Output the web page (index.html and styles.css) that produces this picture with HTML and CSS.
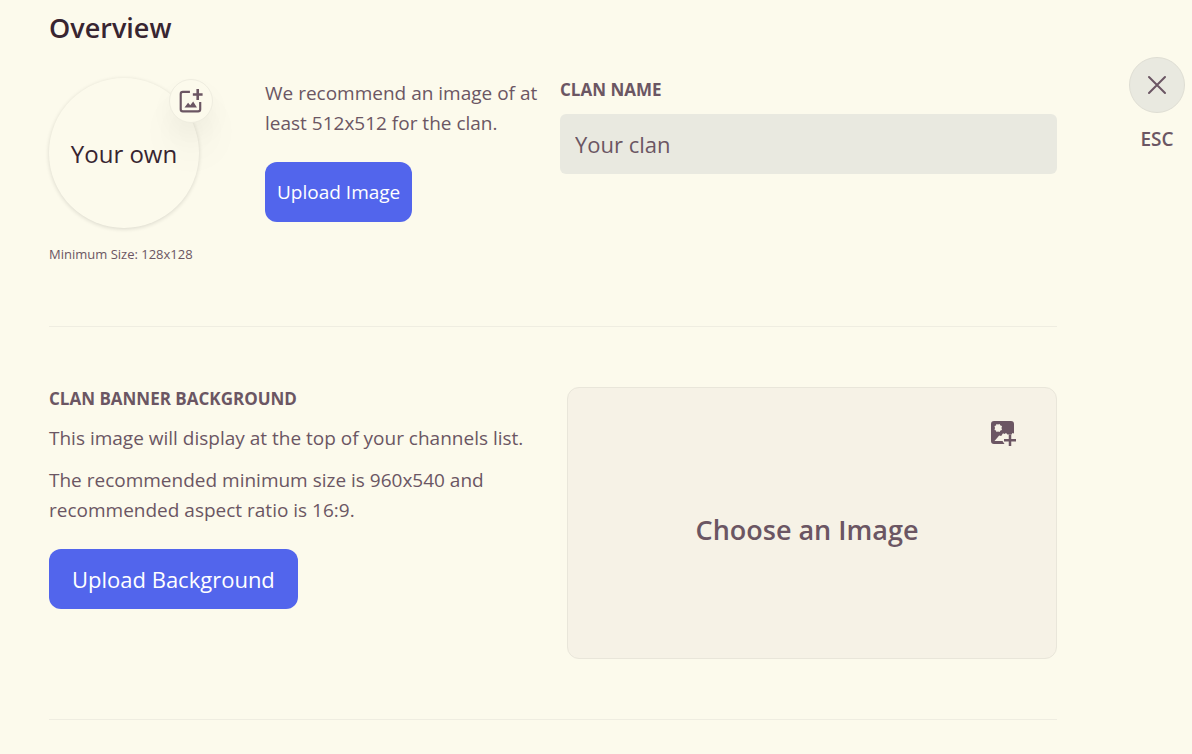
FILE: index.html
```html
<!DOCTYPE html>
<html lang="en">
<head>
<meta charset="utf-8">
<title>Overview</title>
<link rel="stylesheet" href="styles.css">
</head>
<body>
<div class="settings">
  <main class="content">
    <h1 class="title">Overview</h1>
    <section class="section identity">
      <div class="identity-media">
        <div class="avatar-column">
          <div class="avatar">
            <span>Your own</span>
            <button class="avatar-add" type="button" aria-label="Add image">
              <svg width="26" height="26" viewBox="0 0 24 24" fill="currentColor" aria-hidden="true">
                <path d="M18.500 20.500h-14a1 1 0 0 1-1-1v-14a1 1 0 0 1 1-1H11v-2H4.500a3 3 0 0 0-3 3v14a3 3 0 0 0 3 3h14a3 3 0 0 0 3-3V13h-2v6.500a1 1 0 0 1-1 1z"/>
                <path d="M6 18h11.500l-3.500-5.500-2.700 3.400-2-2.400z"/>
                <path d="M17 1h2.400v3.800h3.300v2.400h-3.300V11H17V7.200h-3.300V4.800H17z"/>
              </svg>
            </button>
          </div>
          <p class="hint">Minimum Size: 128x128</p>
        </div>
        <div class="upload">
          <p class="text">We recommend an image of at least 512x512 for the clan.</p>
          <button class="button" type="button">Upload Image</button>
        </div>
      </div>
      <div class="field">
        <label class="label" for="clan-name">CLAN NAME</label>
        <input class="input" id="clan-name" type="text" value="Your clan">
      </div>
    </section>
    <section class="section banner">
      <div class="banner-info">
        <h2 class="label">CLAN BANNER BACKGROUND</h2>
        <p class="text">This image will display at the top of your channels list.</p>
        <p class="text">The recommended minimum size is 960x540 and recommended aspect ratio is 16:9.</p>
        <button class="button button-large" type="button">Upload Background</button>
      </div>
      <button class="picker" type="button">
        <span>Choose an Image</span>
        <svg class="picker-icon" width="26" height="26" viewBox="0 0 26 26" aria-hidden="true">
          <path fill="currentColor" fill-rule="evenodd" d="M4 1h17a3 3 0 0 1 3 3v9.500l-1.500-.5-1 1.500h-4L16 13l-1.500 1-1.500-.8-1.800 2.800-2-.5L4.500 21h8l2 3H4a3 3 0 0 1-3-3V4a3 3 0 0 1 3-3zM6.500 4 6 5.500 4.500 6l.5 2-.5 2 1.500.5.500 1.500 1.500-.5 1.500.5 1-1.500 1.500-.5-.5-2 .5-2-1.500-.5L9.500 4 8 4.500z"/>
          <path fill="none" stroke="currentColor" stroke-width="2.500" d="M20 14.500V26M14 20.300h12"/>
        </svg>
      </button>
    </section>
  </main>
  <aside class="exit">
    <button class="close" type="button" id="close" aria-label="Close">
      <svg width="20" height="20" viewBox="0 0 20 20" fill="none" stroke="currentColor" stroke-width="2" stroke-linecap="round" aria-hidden="true">
        <path d="M2 2l16 16M18 2L2 18"/>
      </svg>
    </button>
    <span class="exit-label">ESC</span>
  </aside>
</div>
</body>
</html>
```
FILE: styles.css
```css
* {
  box-sizing: border-box;
}

body {
  margin: 0;
  background: #fcfaec;
  color: #6b5663;
  font-family: "Open Sans", "Noto Sans", sans-serif;
}

h1, h2, p {
  margin: 0;
}

button, input {
  font-family: inherit;
}

button {
  padding: 0;
  border: 0;
  cursor: pointer;
}

.settings {
  display: flex;
  gap: 72px;
  padding: 8px 7px 0 49px;
}

.content {
  flex: 1;
  min-width: 0;
}

.title {
  margin-bottom: 30px;
  color: #382531;
  font-size: 27px;
  font-weight: 600;
  line-height: 40px;
}

.section {
  display: grid;
  grid-template-columns: 1fr 1fr;
  padding-bottom: 60px;
  border-bottom: 1px solid #efede1;
}

.identity {
  gap: 14px;
}

.identity-media {
  display: flex;
  gap: 66px;
}

.avatar-column {
  flex: none;
  width: 150px;
}

.avatar {
  position: relative;
  display: grid;
  place-items: center;
  width: 150px;
  height: 150px;
  border-radius: 50%;
  box-shadow: 0 1px 4px #00000024;
  color: #382531;
  font-size: 24px;
}

.avatar-add {
  position: absolute;
  top: 1px;
  right: -14px;
  display: grid;
  place-items: center;
  width: 44px;
  height: 44px;
  border: 1px solid #efede0;
  border-radius: 50%;
  background: #fcfaec;
  box-shadow: 0 30px 40px #0000000a, 0 12px 24px #0000000a;
  color: #6b5663;
}

.hint {
  margin: 16px 0 2px;
  font-size: 13px;
  line-height: 20px;
}

.text {
  font-size: 19px;
  line-height: 30px;
}

.button {
  height: 60px;
  margin-top: 24px;
  padding: 0 12px;
  border-radius: 12px;
  background: #5265ec;
  color: #fff;
  font-size: 19px;
}

.button-large {
  padding: 0 23px;
  font-size: 22px;
}

.label {
  display: block;
  font-size: 17px;
  font-weight: 700;
  line-height: 24px;
}

.input {
  width: 100%;
  height: 60px;
  margin-top: 12px;
  padding: 0 15px;
  border: 0;
  border-radius: 6px;
  background: #e9e9e0;
  color: #6b5663;
  font-size: 22px;
}

.banner {
  gap: 28px;
  padding-top: 60px;
}

.banner-info .text {
  margin-top: 12px;
}

.picker {
  position: relative;
  height: 272px;
  padding: 12px 10px 0 0;
  border: 1px solid #e9e6da;
  border-radius: 12px;
  background: #f6f2e6;
  color: #6b5663;
  font-size: 27px;
  font-weight: 600;
}

.picker-icon {
  position: absolute;
  top: 32px;
  right: 40px;
}

.exit {
  display: flex;
  flex-direction: column;
  align-items: center;
  width: 56px;
  padding-top: 49px;
}

.close {
  display: grid;
  place-items: center;
  width: 56px;
  height: 56px;
  border: 1px solid #dfded4;
  border-radius: 50%;
  background: #e9e9e0;
  color: #6b5663;
}

.exit-label {
  margin-top: 11px;
  font-size: 19px;
  font-weight: 600;
  line-height: 30px;
}
```
